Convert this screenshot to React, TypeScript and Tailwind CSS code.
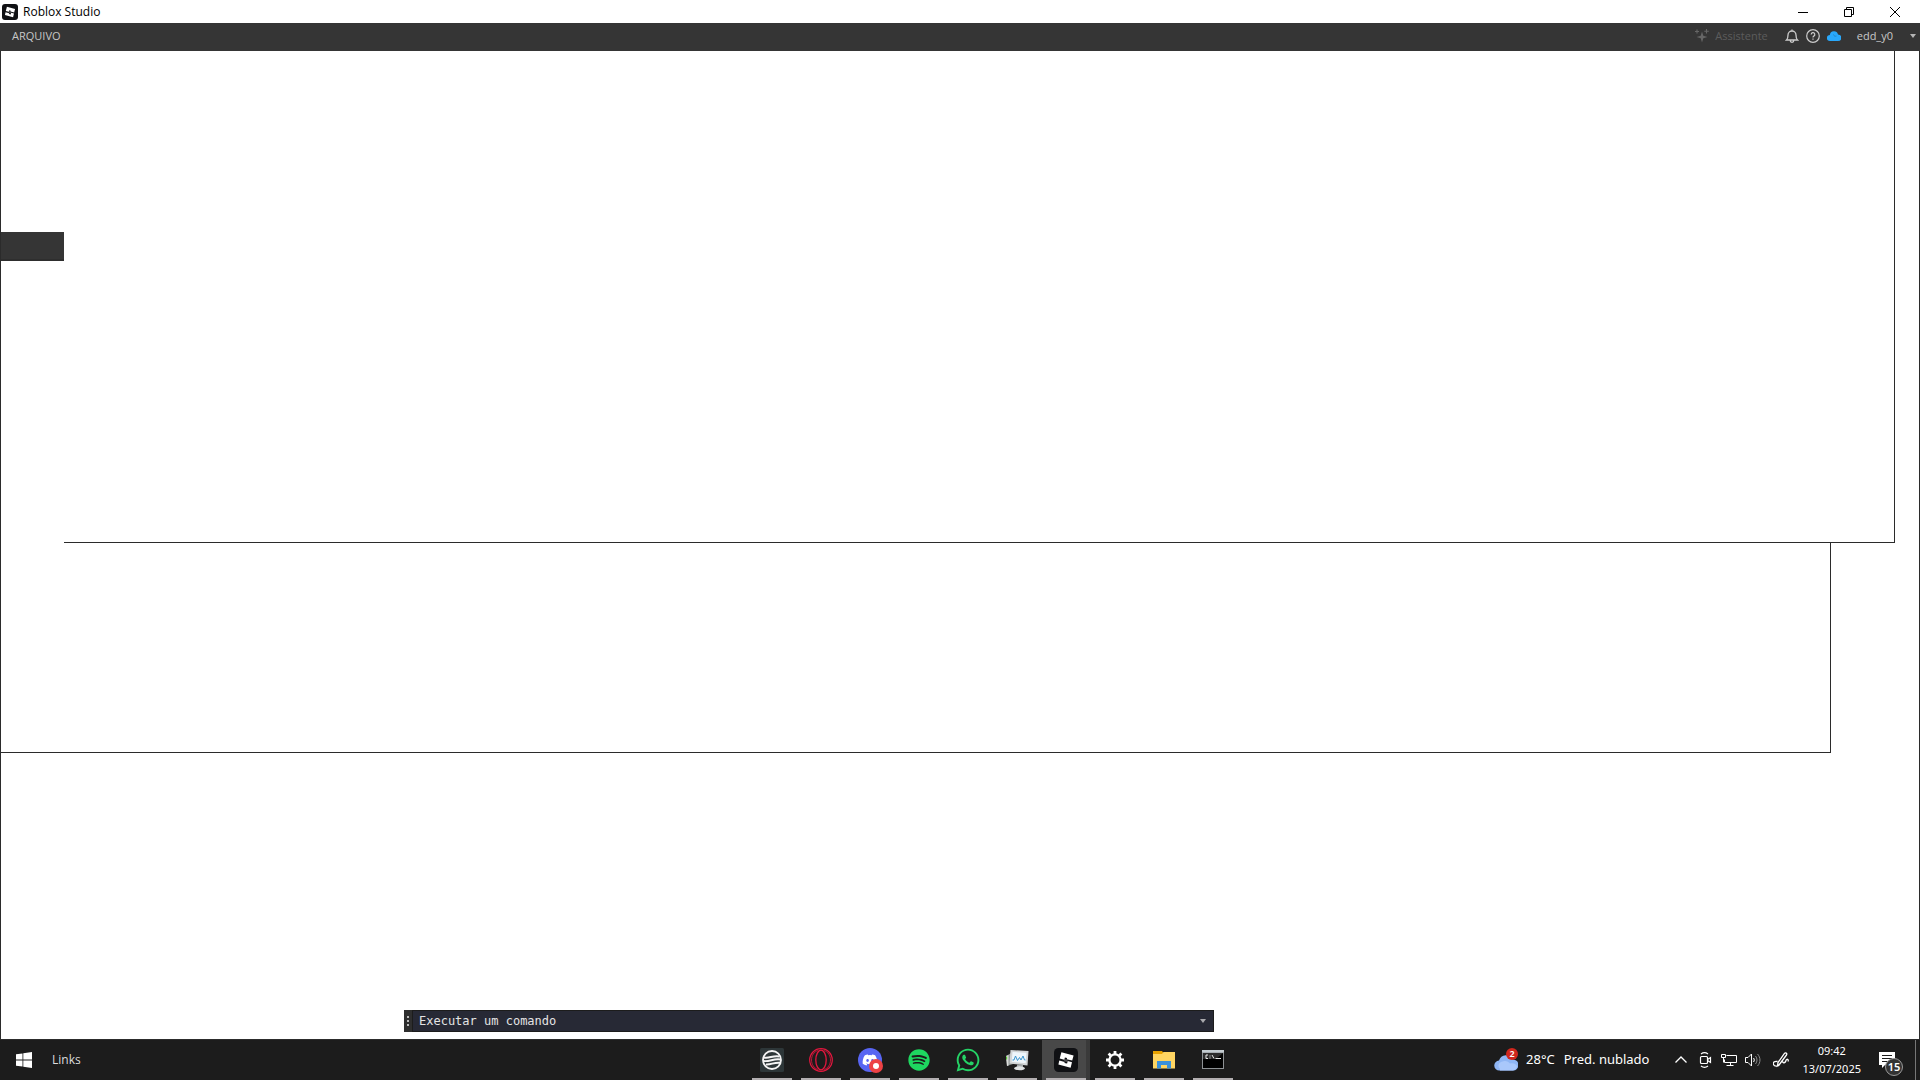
import { ReactNode } from "react";
import { FaDiscord, FaSpotify, FaWhatsapp } from "react-icons/fa";

type TaskItem = {
  label: string;
  icon: ReactNode;
  active?: boolean;
};

const RobloxStudioIcon = ({ className }: { className: string }) => (
  <svg viewBox="0 0 24 24" className={className} aria-hidden="true">
    <rect width="24" height="24" rx="4.5" fill="#101114" />
    <path
      fill="#fff"
      d="M7.400 4.200 19.600 7.400 18.200 12.600 12.800 11.200 13.100 10 10.900 9.400 10.300 11.700 5.700 10.500ZM5.300 12.400 10.700 13.900 10.400 15 13.100 15.600 13.700 13.100 18 14.300 16.600 19.800 4.400 16.600Z"
    />
    <path fill="#fff" d="M10.400 10.900 13.700 11.800 13.100 14 9.900 13.200Z" opacity="0.25" />
  </svg>
);

const WaveIcon = () => (
  <svg viewBox="0 0 24 24" className="size-6" aria-hidden="true">
    <rect width="24" height="24" rx="1.5" fill="#2d3638" />
    <circle cx="12" cy="12" r="9" fill="none" stroke="#f4f4f4" strokeWidth="1.8" />
    <path
      d="M4 9.500c5 1.300 9-2.500 15.500-1M3.500 13c6 1 10-2.700 17-1.500M6 16.500c5 .5 8-2.500 14.500-1.700"
      fill="none"
      stroke="#f4f4f4"
      strokeWidth="1.9"
    />
  </svg>
);

const OperaIcon = () => (
  <svg viewBox="0 0 24 24" className="size-6" fill="none" stroke="#e3173e" aria-hidden="true">
    <circle cx="12" cy="12" r="11.300" strokeWidth="1.200" />
    <ellipse cx="12" cy="12" rx="5.200" ry="9.800" strokeWidth="1.300" />
    <path d="M9 2.600c-4 1-6.500 5-6.500 9.400s2.500 8.400 6.500 9.400M15 2.600c4 1 6.500 5 6.500 9.400s-2.500 8.400-6.500 9.400" strokeWidth=".8" />
  </svg>
);

const DiscordIcon = () => (
  <span className="relative block size-6 rounded-full bg-[#5865f2]">
    <FaDiscord className="mx-auto size-4 translate-y-1 text-white" />
    <span className="absolute -right-px -bottom-px flex size-3.5 items-center justify-center rounded-full bg-[#ed4245]">
      <span className="size-1.5 rounded-full bg-white" />
    </span>
  </span>
);

const MonitorIcon = () => (
  <svg viewBox="0 0 24 24" className="size-6" aria-hidden="true">
    <path d="M1 8 8 4v12l-6 2Z" fill="#8c9291" />
    <path d="M1 8 3.500 7v10.500L2 18Z" fill="#dadcdb" />
    <path d="M5.500 2 23.500 3 22.500 17.500 4.500 15.500Z" fill="#d2d5d6" />
    <path d="M7.500 4 21.500 4.700 20.700 15.200 6.700 13.800Z" fill="#eef6fb" />
    <path d="M7.500 12h1.500l1.500-4 2 4.500 2-3 1.500 2.500 2-4 1.500 4h1" fill="none" stroke="#3a94cd" />
    <path d="M12 16.500h6v3h-6Z" fill="#a3a8aa" />
    <ellipse cx="14.500" cy="20.300" rx="5.500" ry="2" fill="#dfe2e3" />
    <path d="M1 8.500h1.200v3H1Z" fill="#58c432" />
  </svg>
);

const GearIcon = () => (
  <svg viewBox="0 0 24 24" className="size-6" fill="none" stroke="#fff" aria-hidden="true">
    <circle cx="12" cy="12" r="5.600" strokeWidth="2.300" />
    <path
      d="M12 3v3M12 18v3M3 12h3M18 12h3M5.600 5.600l2.200 2.200M16.200 16.200l2.200 2.200M18.400 5.600l-2.200 2.200M7.800 16.200l-2.200 2.200"
      strokeWidth="2.800"
    />
  </svg>
);

const FolderIcon = () => (
  <svg viewBox="0 0 24 24" className="size-6" aria-hidden="true">
    <path d="M1 3h9l1.500 2H23v15H1Z" fill="#e8a200" />
    <path d="M1 6h9l1.500-2H23v16.500H1Z" fill="#ffd561" />
    <path d="M5 20.500V13h14v7.500h-4V17H9v3.500Z" fill="#3b91da" />
  </svg>
);

const TerminalIcon = () => (
  <svg viewBox="0 0 24 24" className="size-6" aria-hidden="true">
    <rect x="1" y="2" width="22" height="19" fill="#8d9194" />
    <rect x="1" y="2" width="22" height="2.500" fill="#c4ccd1" />
    <rect x="2" y="5" width="20" height="15" fill="#000" />
    <path d="M2 5h20l-7 6H2Z" fill="#2c2c2c" />
    <path d="M7 7H5v3.500h2M9 7.500v1M9 9.500v1M11 7l2 3.500M14.500 10.500H20" fill="none" stroke="#e8e8e8" />
  </svg>
);

const taskItems: TaskItem[] = [
  { label: "Wave", icon: <WaveIcon /> },
  { label: "Opera GX", icon: <OperaIcon /> },
  { label: "Discord", icon: <DiscordIcon /> },
  { label: "Spotify", icon: <FaSpotify className="size-[22px] text-[#1ed760]" /> },
  { label: "WhatsApp", icon: <FaWhatsapp className="size-[26px] text-[#25d366]" /> },
  { label: "Monitor", icon: <MonitorIcon /> },
  { label: "Roblox Studio", icon: <RobloxStudioIcon className="size-6" />, active: true },
  { label: "Configurações", icon: <GearIcon /> },
  { label: "Explorador de Arquivos", icon: <FolderIcon /> },
  { label: "Prompt de Comando", icon: <TerminalIcon /> },
];

const TitleBar = () => (
  <header className="flex h-[23px] items-center justify-between bg-white pl-0.5 text-black">
    <div className="flex items-center gap-[5px]">
      <RobloxStudioIcon className="size-4" />
      <h1 className="font-['Open_Sans',sans-serif] text-xs">Roblox Studio</h1>
    </div>
    <div className="flex pr-0.5">
      <button aria-label="Minimizar" className="flex h-[23px] w-[46px] items-center justify-center">
        <svg viewBox="0 0 10 10" className="size-2.5" stroke="#000" fill="none">
          <path d="M0 5.500h10" />
        </svg>
      </button>
      <button aria-label="Restaurar" className="flex h-[23px] w-[46px] items-center justify-center">
        <svg viewBox="0 0 10 10" className="size-2.5" stroke="#000" fill="none">
          <path d="M.5 2.500h7v7h-7ZM2.500 2.500v-2h7v7h-2" />
        </svg>
      </button>
      <button aria-label="Fechar" className="flex h-[23px] w-[46px] items-center justify-center">
        <svg viewBox="0 0 10 10" className="size-2.5" stroke="#000" fill="none">
          <path d="m0 0 10 10M10 0 0 10" />
        </svg>
      </button>
    </div>
  </header>
);

const MenuBar = () => (
  <nav className="flex h-7 items-center justify-between bg-[#353535] pr-1 pb-0.5 pl-3 font-['Open_Sans',sans-serif] text-[11px] text-[#c8c8c8]">
    <button className="leading-4">ARQUIVO</button>
    <div className="flex items-center">
      <button disabled className="mr-[17px] flex items-center gap-1.5 text-[#5c5c5c]">
        <svg viewBox="0 0 14 14" className="size-3.5" fill="#666" aria-hidden="true">
          <path d="M7 2.500 8.300 6.700 12.500 8 8.300 9.300 7 13.500 5.700 9.300 1.500 8 5.700 6.700Z" />
          <path d="M2 .5v4M0 2.500h4M11.500 0v4.500M9.300 2.200h4.500" stroke="#666" strokeWidth="1.100" />
        </svg>
        Assistente
      </button>
      <button aria-label="Notificações" className="mr-[7px]">
        <svg viewBox="0 0 14 14" className="size-3.5" fill="none" stroke="#ccc" strokeWidth="1.300" aria-hidden="true">
          <path d="M1.500 11c1.200-1 1.500-2.500 1.500-5a4 4 0 0 1 8 0c0 2.500.3 4 1.500 5ZM5.200 11.500a1.800 1.800 0 0 0 3.600 0M7 .5v1.500" />
        </svg>
      </button>
      <button aria-label="Ajuda" className="mr-[7px]">
        <svg viewBox="0 0 14 14" className="size-3.5" fill="none" stroke="#ccc" strokeWidth="1.200" aria-hidden="true">
          <circle cx="7" cy="7" r="6.300" />
          <path d="M5.200 5.500a1.800 1.800 0 1 1 2.600 1.600c-.6.300-.8.600-.8 1.400M7 9.500v1.300" />
        </svg>
      </button>
      <button aria-label="Nuvem" className="mr-4">
        <svg viewBox="0 0 14 14" className="size-3.5" aria-hidden="true">
          <path d="M2.800 12A3 3 0 0 1 2.800 6a4.200 4.200 0 0 1 8.200-.6A3.300 3.300 0 0 1 11 12Z" fill="#29a8fb" />
          <path d="M6.500 5.500c.3 1.500 1.500 2 3 1.500" stroke="#1d78b6" strokeWidth=".7" fill="none" />
        </svg>
      </button>
      <button className="flex items-center gap-[17px]">
        edd_y0
        <svg viewBox="0 0 6 4" className="h-1 w-1.5" fill="#b5b5b5" aria-hidden="true">
          <path d="M0 0h6L3 4Z" />
        </svg>
      </button>
    </div>
  </nav>
);

const CommandBar = () => (
  <form
    className="mb-[7px] ml-[403px] flex h-[22px] w-[810px] bg-[#2e2e2e]"
    onSubmit={(e) => e.preventDefault()}
  >
    <span className="flex w-2 flex-col items-center justify-center gap-0.5">
      <i className="size-0.5 bg-[#bbb]" />
      <i className="size-0.5 bg-[#bbb]" />
      <i className="size-0.5 bg-[#bbb]" />
    </span>
    <div className="flex flex-1 items-center border border-[#1c1c1c] bg-[#272935] pr-[7px] pl-1.5">
      <input
        aria-label="Linha de comando"
        placeholder="Executar um comando"
        className="h-5 min-w-0 flex-1 bg-transparent font-['DejaVu_Sans_Mono',monospace] text-xs text-[#e4e4e4] outline-none placeholder:text-[#e4e4e4]"
      />
      <button aria-label="Histórico">
        <svg viewBox="0 0 6 4" className="h-1 w-1.5" fill="#a9a9ad">
          <path d="M0 0h6L3 4Z" />
        </svg>
      </button>
    </div>
  </form>
);

const Tray = () => (
  <div className="flex h-10 items-center">
    <button className="flex items-center gap-2 text-[13px]">
      <span className="relative block size-6">
        <svg viewBox="0 0 24 24" className="size-6" aria-hidden="true">
          <path d="M5.500 22.500a5 5 0 0 1-.5-10A7.500 7.500 0 0 1 19 11.500a5.500 5.500 0 0 1 0 11Z" fill="#8fb6f4" />
          <path d="M6 21a4 4 0 0 1 1-7c4-2 7-1 9 1.500 3-1 6 .5 7 2.500a5 5 0 0 1-4 4.500H6Z" fill="#a9c8fb" />
        </svg>
        <span className="absolute top-0 right-0 flex size-3 items-center justify-center rounded-full bg-[#d0271d] text-[9px] font-semibold">
          2
        </span>
      </span>
      <span className="mr-px">28°C</span>
      <span>Pred. nublado</span>
    </button>
    <div className="mr-[13px] ml-[26px] flex items-center gap-2">
      <button aria-label="Mostrar ícones ocultos" className="mr-0.5">
        <svg viewBox="0 0 12 16" className="h-4 w-3" fill="none" stroke="#fff" strokeWidth="1.300">
          <path d="m.5 10.500 5.500-5.500 5.500 5.500" />
        </svg>
      </button>
      <button aria-label="Reunião">
        <svg viewBox="0 0 16 16" className="size-4" fill="none" stroke="#fff" strokeWidth="1.200">
          <rect x="3.500" y="4.500" width="7" height="7" rx="1" />
          <path d="m10.500 7.500 3-2v5l-3-2M4 2c2-1.500 5-1.500 7 0M4 14c2 1.500 5 1.500 7 0" />
        </svg>
      </button>
      <button aria-label="Rede">
        <svg viewBox="0 0 16 16" className="size-4" fill="none" stroke="#fff">
          <path d="M5.500 3.500h10v7h-12v-3M9.500 10.500v3M5.500 13.500h7M.5 2.500h4v3h-4ZM2.500 5.500v5" />
        </svg>
      </button>
      <button aria-label="Volume">
        <svg viewBox="0 0 16 16" className="size-4" fill="none" stroke="#fff">
          <path d="M.5 5.500h2.500L6.500 2v12L3 10.500H.5ZM8.500 6c1 1.300 1 2.700 0 4" />
          <path d="M10.500 4c2 2.500 2 5.500 0 8M12.500 2c3.300 3.500 3.300 8.500 0 12" stroke="#8a8a8a" />
        </svg>
      </button>
      <button aria-label="Windows Ink" className="ml-1">
        <svg viewBox="0 0 16 16" className="size-4" fill="none" stroke="#fff" strokeWidth="1.300">
          <path d="M4.500 9.500c-3-.5-5 1-4 3s4 2.500 6 0M6 13 13.500 3c1-1.500-1-3-2.200-1.300L5 10.500 4.500 14ZM9.500 9.500c1 2.500 3 1 3.500-1s3-1.500 2 1" />
        </svg>
      </button>
    </div>
    <button className="text-center text-[11px] leading-[18px]">
      <time dateTime="2025-07-13T09:42">
        09:42
        <br />
        13/07/2025
      </time>
    </button>
    <button aria-label="Central de ações, 15 notificações" className="relative mr-3 ml-[18px] size-6">
      <svg viewBox="0 0 24 24" className="size-6" aria-hidden="true">
        <path d="M0 4h16v13H6l-3 3v-3H0Z" fill="#fff" />
        <path d="M3 7.500h10M3 10.500h10M3 13.500h6" stroke="#1c1c1c" />
      </svg>
      <span className="absolute right-0 -bottom-1 flex size-[18px] items-center justify-center rounded-full border border-[#9a9a9a] bg-[#333] text-[11px] font-semibold">
        15
      </span>
    </button>
    <button aria-label="Mostrar área de trabalho" className="h-10 w-[5px] border-l border-[#777]" />
  </div>
);

const Taskbar = () => (
  <footer className="grid h-[41px] grid-cols-[1fr_auto_1fr] border-t border-[#2c2c2c] bg-[#1c1c1c] text-white">
    <div className="flex items-center gap-5 pl-4">
      <button aria-label="Iniciar">
        <svg viewBox="0 0 16 16" className="size-4" fill="#fff">
          <path d="M0 2.300 6.500 1.400v6.200H0ZM7.300 1.200 16 0v7.600H7.300ZM0 8.400h6.500v6.200L0 13.700ZM7.300 8.400H16V16l-8.700-1.200Z" />
        </svg>
      </button>
      <a href="#links" className="font-['Open_Sans',sans-serif] text-xs text-[#ddd]">
        Links
      </a>
    </div>
    <div className="flex gap-px pl-[65px]">
      {taskItems.map((item) => (
        <button
          key={item.label}
          aria-label={item.label}
          className={`flex h-10 w-12 flex-col items-center ${
            item.active ? "border-r-4 border-[#3a3a3a] bg-[#484848] pl-1" : ""
          }`}
        >
          <span className="flex flex-1 items-center pt-0.5">{item.icon}</span>
          <span className={`h-0.5 bg-[#b3afb1] ${item.active ? "w-full" : "w-10"}`} />
        </button>
      ))}
    </div>
    <div className="flex justify-end">
      <Tray />
    </div>
  </footer>
);

export default function App() {
  return (
    <div className="flex min-h-screen flex-col bg-white font-['Noto_Sans',sans-serif]">
      <TitleBar />
      <MenuBar />
      <main className="flex flex-1 flex-col border-x border-[#2b2b2b]">
        {/* Upper dock with the collapsed side tab */}
        <section className="flex h-[492px] pr-6">
          <div className="w-[63px] pt-[181px]">
            <div className="h-[29px] border-b-2 border-[#2e2e2e] bg-[#353535]" />
          </div>
          <div className="flex-1 border-r border-b border-[#2b2b2b]" />
        </section>
        {/* Lower dock */}
        <section className="mr-[88px] h-[210px] border-r border-b border-[#2b2b2b]" />
        <div className="flex flex-1 items-end">
          <CommandBar />
        </div>
      </main>
      <Taskbar />
    </div>
  );
}
